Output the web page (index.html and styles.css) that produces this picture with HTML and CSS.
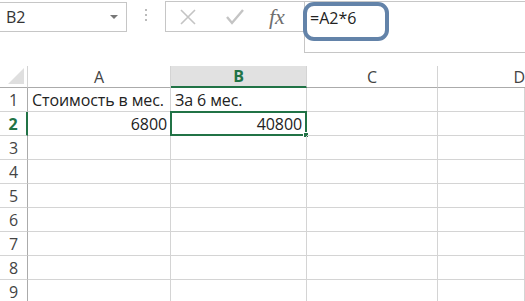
FILE: index.html
```html
<!DOCTYPE html>
<html lang="ru">
<head>
    <meta charset="UTF-8">
    <title>Excel</title>
    <link rel="stylesheet" href="styles.css">
</head>
<body>
    <div class="app">
        <div class="toolbar">
            <div class="name-box">
                <span>B2</span>
                <span class="caret"></span>
            </div>
            <div class="grip"><i></i><i></i><i></i></div>
            <div class="formula-area">
                <div class="fx-buttons">
                    <svg class="btn-icon" width="18" height="18" viewBox="0 0 18 18">
                        <path d="M2 2 L16 16 M16 2 L2 16" stroke="#c4c4c4" stroke-width="1.6" fill="none"/>
                    </svg>
                    <svg class="btn-icon" width="20" height="18" viewBox="0 0 20 18">
                        <path d="M2 9 L7 15 L18 2" stroke="#c4c4c4" stroke-width="2.4" fill="none"/>
                    </svg>
                    <span class="fx">fx</span>
                </div>
                <div class="formula-input">
                    <span class="formula-text">=A2*6</span>
                    <div class="highlight"></div>
                </div>
            </div>
        </div>

        <div class="sheet">
            <div class="corner"><span class="tri"></span></div>
            <div class="col-head">A</div>
            <div class="col-head sel">B</div>
            <div class="col-head">C</div>
            <div class="col-head last">D</div>

            <div class="row-head">1</div>
            <div class="cell">Стоимость в мес.</div>
            <div class="cell">За 6 мес.</div>
            <div class="cell"></div>
            <div class="cell"></div>

            <div class="row-head sel">2</div>
            <div class="cell num">6800</div>
            <div class="cell num active">40800<span class="handle"></span></div>
            <div class="cell"></div>
            <div class="cell"></div>

            <div class="row-head">3</div><div class="cell"></div><div class="cell"></div><div class="cell"></div><div class="cell"></div>
            <div class="row-head">4</div><div class="cell"></div><div class="cell"></div><div class="cell"></div><div class="cell"></div>
            <div class="row-head">5</div><div class="cell"></div><div class="cell"></div><div class="cell"></div><div class="cell"></div>
            <div class="row-head">6</div><div class="cell"></div><div class="cell"></div><div class="cell"></div><div class="cell"></div>
            <div class="row-head">7</div><div class="cell"></div><div class="cell"></div><div class="cell"></div><div class="cell"></div>
            <div class="row-head">8</div><div class="cell"></div><div class="cell"></div><div class="cell"></div><div class="cell"></div>
            <div class="row-head">9</div><div class="cell"></div><div class="cell"></div><div class="cell"></div><div class="cell"></div>
        </div>
    </div>
</body>
</html>
```

FILE: styles.css
```css
* {
    margin: 0;
    padding: 0;
    box-sizing: border-box;
}

body {
    font-family: 'Open Sans', 'Noto Sans', Arial, sans-serif;
    background-color: white;
    color: #222;
    overflow: hidden;
}

.app {
    width: 525px;
    height: 301px;
    overflow: hidden;
}

.toolbar {
    display: flex;
    height: 66px;
}

.name-box {
    width: 127px;
    height: 30px;
    margin-top: 2px;
    border: 1px solid #c6c6c6;
    border-left: none;
    display: flex;
    align-items: center;
    justify-content: space-between;
    padding: 0 8px 0 6px;
    font-size: 16px;
    color: #333;
}

.caret {
    width: 0;
    height: 0;
    border-left: 4px solid transparent;
    border-right: 4px solid transparent;
    border-top: 4px solid #777;
}

.grip {
    width: 38px;
    display: flex;
    flex-direction: column;
    align-items: center;
    gap: 3px;
    padding-top: 9px;
}

.grip i {
    width: 2px;
    height: 2px;
    background-color: #bbb;
}

.formula-area {
    flex: 1;
    display: flex;
    align-items: flex-start;
}

.fx-buttons {
    width: 139px;
    height: 31px;
    margin-top: 1px;
    border-top: 1px solid #c6c6c6;
    border-left: 1px solid #c6c6c6;
    border-bottom: 1px solid #c6c6c6;
    display: flex;
    align-items: center;
    padding-left: 13px;
    gap: 28px;
}

.fx {
    font-family: 'Liberation Serif', 'DejaVu Serif', serif;
    font-style: italic;
    font-size: 22px;
    color: #6f6f6f;
    margin-left: -4px;
}

.formula-input {
    flex: 1;
    position: relative;
    height: 52px;
    margin-top: 1px;
    border-top: 1px solid #c6c6c6;
    border-left: 1px solid #c6c6c6;
    border-bottom: 1px solid #c6c6c6;
    padding: 5px 0 0 5px;
    font-size: 16px;
}

.highlight {
    position: absolute;
    left: -2px;
    top: 0;
    width: 86px;
    height: 39px;
    border: 4px solid #6383a9;
    border-radius: 11px;
}

.sheet {
    display: grid;
    grid-template-columns: 28px 143px 136px 131px 87px;
    grid-template-rows: 22px repeat(9, 24px);
}

.corner {
    border-right: 1px solid #d4d4d4;
    border-bottom: 1px solid #ababab;
    position: relative;
}

.tri {
    position: absolute;
    right: 3px;
    bottom: 3px;
    width: 0;
    height: 0;
    border-left: 16px solid transparent;
    border-bottom: 16px solid #dfdfdf;
}

.col-head {
    border-right: 1px solid #d4d4d4;
    border-bottom: 1px solid #ababab;
    display: flex;
    align-items: center;
    justify-content: center;
    font-size: 16px;
    color: #444;
}

.col-head.last {
    justify-content: flex-end;
    border-right: none;
}

.col-head.sel {
    background-color: #e1e1e1;
    color: #217346;
    font-weight: bold;
    border-bottom: 2px solid #217346;
}

.row-head {
    border-right: 1px solid #ababab;
    border-bottom: 1px solid #d4d4d4;
    display: flex;
    align-items: center;
    justify-content: center;
    font-size: 16px;
    color: #444;
}

.row-head.sel {
    color: #217346;
    font-weight: bold;
    border-right: 2px solid #217346;
}

.cell {
    border-right: 1px solid #d4d4d4;
    border-bottom: 1px solid #d4d4d4;
    display: flex;
    align-items: center;
    padding: 0 3px 0 4px;
    font-size: 16px;
    letter-spacing: -0.1px;
    white-space: nowrap;
    position: relative;
}

.cell.num {
    justify-content: flex-end;
}

.cell.active {
    border: 2px solid #217346;
    margin: -1px 0 0 -1px;
}

.handle {
    position: absolute;
    right: -4px;
    bottom: -4px;
    width: 6px;
    height: 6px;
    background-color: #217346;
    border: 1px solid white;
}
```
